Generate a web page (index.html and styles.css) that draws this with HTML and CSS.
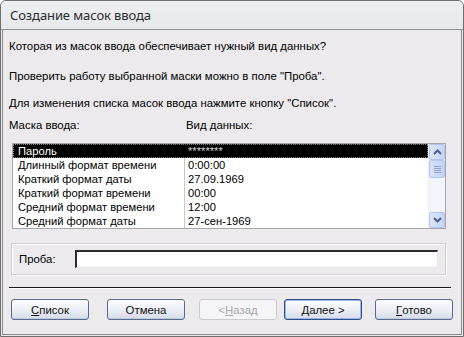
FILE: index.html
```html
<!DOCTYPE html>
<html lang="ru">
<head>
<meta charset="utf-8">
<title>Создание масок ввода</title>
<link rel="stylesheet" href="styles.css">
</head>
<body>
<div class="window">
  <div class="titlebar">Создание масок ввода</div>
  <div class="frame">
    <div class="client">
      <p class="line l1">Которая из масок ввода обеспечивает нужный вид данных?</p>
      <p class="line l2">Проверить работу выбранной маски можно в поле "Проба".</p>
      <p class="line l3">Для изменения списка масок ввода нажмите кнопку "Список".</p>
      <div class="heads">
        <span class="h1">Маска ввода:</span>
        <span class="h2">Вид данных:</span>
      </div>
      <div class="listbox">
        <div class="rows">
          <div class="row sel"><span class="c1">Пароль</span><span class="c2">********</span></div>
          <div class="row"><span class="c1">Длинный формат времени</span><span class="c2">0:00:00</span></div>
          <div class="row"><span class="c1">Краткий формат даты</span><span class="c2">27.09.1969</span></div>
          <div class="row"><span class="c1">Краткий формат времени</span><span class="c2">00:00</span></div>
          <div class="row"><span class="c1">Средний формат времени</span><span class="c2">12:00</span></div>
          <div class="row"><span class="c1">Средний формат даты</span><span class="c2">27-сен-1969</span></div>
        </div>
        <div class="scrollbar">
          <div class="sbtn up"><svg width="9" height="6" viewBox="0 0 9 6"><path d="M1 5 L4.5 1.5 L8 5" fill="none" stroke="#4d6185" stroke-width="2"/></svg></div>
          <div class="thumb"><svg width="7" height="8" viewBox="0 0 7 8"><path d="M0 1.5h7M0 3.5h7M0 5.5h7M0 7.5h7" stroke="#8fa3c8" stroke-width="1"/></svg></div>
          <div class="track"></div>
          <div class="sbtn down"><svg width="9" height="6" viewBox="0 0 9 6"><path d="M1 1 L4.5 4.5 L8 1" fill="none" stroke="#4d6185" stroke-width="2"/></svg></div>
        </div>
      </div>
      <div class="group">
        <span class="plabel">Проба:</span>
        <div class="input"></div>
      </div>
      <div class="sep"></div>
      <div class="buttons">
        <div class="btn b1"><u>С</u>писок</div>
        <div class="btn b2">Отмена</div>
        <div class="btn b3 disabled">&lt; <u>Н</u>азад</div>
        <div class="btn b4 default"><u>Д</u>алее &gt;</div>
        <div class="btn b5"><u>Г</u>отово</div>
      </div>
    </div>
  </div>
</div>
</body>
</html>
```

FILE: styles.css
```css
* { box-sizing: border-box; }
html, body { margin: 0; padding: 0; }
body {
  width: 464px;
  height: 337px;
  background: #ffffff;
  overflow: hidden;
}
.window {
  width: 464px;
  height: 337px;
  border: 1px solid #6e6e6e;
  border-radius: 6px 6px 0 0;
  background: #eceaed;
  display: flex;
  flex-direction: column;
}
.titlebar {
  height: 29px;
  flex: none;
  padding-left: 9px;
  display: flex;
  align-items: center;
  font-family: "Noto Sans", sans-serif;
  font-size: 13px;
  letter-spacing: -0.1px;
  color: #2b2b2b;
  background: linear-gradient(#eef0f3, #e5e8ec);
  border-bottom: 1px solid #8f9296;
  border-radius: 5px 5px 0 0;
}
.frame {
  flex: 1;
  padding: 0 1px 1px 1px;
  display: flex;
}
.client {
  flex: 1;
  border: 1px solid #8a8a8a;
  border-top: none;
  display: flex;
  flex-direction: column;
  font-family: "Liberation Sans", Arial, sans-serif;
  font-size: 11.4px;
  color: #000;
  background: #eceaed;
}
.line {
  margin: 0;
  padding-left: 6px;
  height: 13px;
  line-height: 13px;
}
.l1 { margin-top: 10px; }
.l2 { margin-top: 17px; }
.l3 { margin-top: 14px; }
.heads {
  margin-top: 9px;
  height: 13px;
  line-height: 13px;
  display: flex;
  padding-left: 6px;
}
.h1 { width: 177px; }
.listbox {
  margin-top: 11px;
  margin-left: 9px;
  width: 434px;
  height: 86px;
  border: 1px solid #a7a6aa;
  background: #fff;
  display: flex;
  font-size: 11.2px;
}
.rows {
  flex: 1;
  display: flex;
  flex-direction: column;
}
.row {
  height: 14px;
  line-height: 14px;
  display: flex;
  white-space: nowrap;
  color: #000;
}
.c1 { width: 171px; padding-left: 5px; }
.c2 { flex: 1; padding-left: 3px; border-left: 1px solid #c8c8c8; }
.row.sel {
  background: #000;
  color: #fff;
  outline: 1px dotted #808080;
  outline-offset: -1px;
}
.row.sel .c2 { border-left-color: #000; color: #cfcfcf; }
.scrollbar {
  width: 17px;
  display: flex;
  flex-direction: column;
  background: #f3f5fb;
  border-left: 1px solid #eef0f6;
}
.sbtn {
  height: 16px;
  border: 1px solid #b5c6ee;
  border-radius: 2px;
  background: linear-gradient(90deg, #dbe5fb, #c6d5f6);
  display: flex;
  align-items: center;
  justify-content: center;
}
.thumb {
  height: 18px;
  border: 1px solid #b5c6ee;
  border-radius: 2px;
  background: linear-gradient(90deg, #d6e1fa, #c4d3f5);
  display: flex;
  align-items: center;
  justify-content: center;
}
.track { flex: 1; }
.group {
  margin-top: 14px;
  margin-left: 8px;
  width: 435px;
  height: 32px;
  border: 1px solid #cfcdd2;
  box-shadow: inset 1px 1px 0 #fff, 1px 1px 0 #fff;
  display: flex;
  align-items: center;
}
.plabel {
  padding-left: 7px;
  width: 63px;
  flex: none;
}
.input {
  width: 363px;
  height: 18px;
  background: #fff;
  border-top: 2px solid #2a2a2a;
  border-left: 2px solid #2a2a2a;
  border-right: 1px solid #e4e4e4;
  border-bottom: 1px solid #e4e4e4;
}
.sep {
  margin-top: 12px;
  margin-left: 6px;
  width: 442px;
  height: 2px;
  border-top: 1px solid #1a1a1a;
  border-bottom: 1px solid #ffffff;
}
.buttons {
  margin-top: 10px;
  display: flex;
  padding-left: 8px;
}
.btn {
  width: 78px;
  height: 21px;
  border: 1px solid #5a6c8e;
  border-radius: 3px;
  background: linear-gradient(#fcfdfe 0%, #eef1f7 45%, #d4dbe9 100%);
  box-shadow: inset 0 -1px 0 #c1cade;
  display: flex;
  align-items: center;
  justify-content: center;
  font-size: 11.4px;
  color: #111;
}
.b2 { margin-left: 18px; }
.b3 { margin-left: 14px; }
.b4 { margin-left: 7px; }
.b5 { margin-left: 13px; }
.btn.disabled {
  border-color: #c9cbd1;
  background: #f5f5f7;
  box-shadow: none;
  color: #a9a9ae;
}
.btn.default {
  border-color: #2d4d8c;
  box-shadow: inset 0 0 0 1px #9db6e6, inset 0 -1px 0 #9db6e6;
}
u { text-decoration: underline; text-underline-offset: 1px; }
```
